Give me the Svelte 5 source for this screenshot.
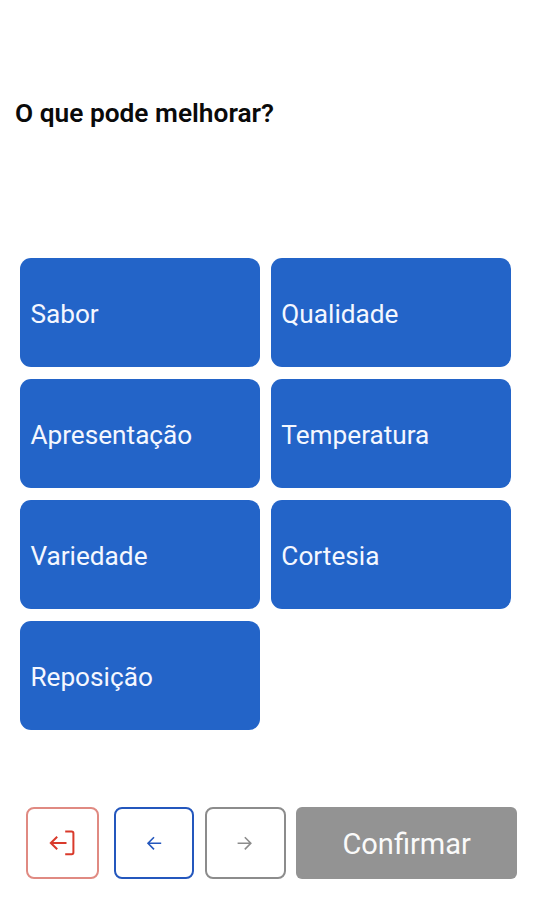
<script>
	const question = "O que pode melhorar?";
	const options = [
		"Sabor",
		"Qualidade",
		"Apresentação",
		"Temperatura",
		"Variedade",
		"Cortesia",
		"Reposição"
	];

	let selected = $state([]);

	function toggle(option) {
		selected = selected.includes(option)
			? selected.filter((item) => item !== option)
			: [...selected, option];
	}
</script>

<main class="survey">
	<h1 class="question">{question}</h1>

	<div class="options">
		{#each options as option}
			<button class="option" class:selected={selected.includes(option)} onclick={() => toggle(option)}>
				<span>{option}</span>
			</button>
		{/each}
	</div>

	<footer class="actions">
		<button class="action exit" aria-label="Sair">
			<svg width="26" height="26" viewBox="0 0 26 26">
				<path d="M16.2 1.5H22.6Q24.4 1.5 24.4 3.3V22.5Q24.4 24.3 22.6 24.3H16.2M17.5 13H1.8M8.2 6.7L1.8 13L8.2 19.3" />
			</svg>
		</button>
		<button class="action back" aria-label="Voltar">
			<svg width="16" height="16" viewBox="0 0 16 16">
				<path d="M15.2 8.3H2M8 2.2L2 8.3L8 14.4" />
			</svg>
		</button>
		<button class="action next" aria-label="Avançar">
			<svg width="16" height="16" viewBox="0 0 16 16">
				<path d="M0.6 8.3H13.8M7.8 2.2L13.8 8.3L7.8 14.4" />
			</svg>
		</button>
		<button class="confirm">Confirmar</button>
	</footer>
</main>

<style>
	:global(body) {
		background: #fff;
	}

	.survey {
		display: flex;
		flex-direction: column;
		height: 900px;
		box-sizing: border-box;
		padding: 97px 21px 21px 15px;
		font-family: Roboto, "Liberation Sans", sans-serif;
	}

	button {
		font: inherit;
		margin: 0;
		cursor: pointer;
		box-sizing: border-box;
	}

	.question {
		margin: 0;
		font-size: 26.3px;
		font-weight: 600;
		line-height: 32px;
		color: #0a0a0a;
	}

	.options {
		display: grid;
		grid-template-columns: 1fr 1fr;
		grid-auto-rows: 109px;
		gap: 11.8px;
		margin: 129.4px 6.5px 0 5.4px;
	}

	.option {
		display: flex;
		align-items: center;
		padding: 3px 10px 0;
		border: none;
		border-radius: 11px;
		background: #2364c8;
		color: #f4f7ff;
		font-size: 26.2px;
		text-align: left;
	}

	.option.selected {
		background: #174a9c;
	}

	.actions {
		display: flex;
		height: 72px;
		margin-top: auto;
		padding-left: 11px;
	}

	.action {
		display: flex;
		align-items: center;
		justify-content: center;
		padding: 0;
		background: #fff;
		border: 2px solid currentColor;
		border-radius: 8px;
	}

	.action svg {
		fill: none;
		stroke: currentColor;
		stroke-width: 1.6;
	}

	.exit {
		width: 72.5px;
		border: 2px solid #e08a82;
		color: #d93a2b;
	}

	.exit svg {
		stroke-width: 2;
	}

	.back {
		width: 80.5px;
		margin-left: 15px;
		color: #2457bd;
	}

	.next {
		width: 81px;
		margin-left: 10.8px;
		color: #8c8c8c;
	}

	.confirm {
		flex: 1;
		margin-left: 10.5px;
		padding: 2px 0 0;
		border: none;
		border-radius: 6px;
		background: #939393;
		color: #fafafa;
		font-size: 29px;
	}
</style>
